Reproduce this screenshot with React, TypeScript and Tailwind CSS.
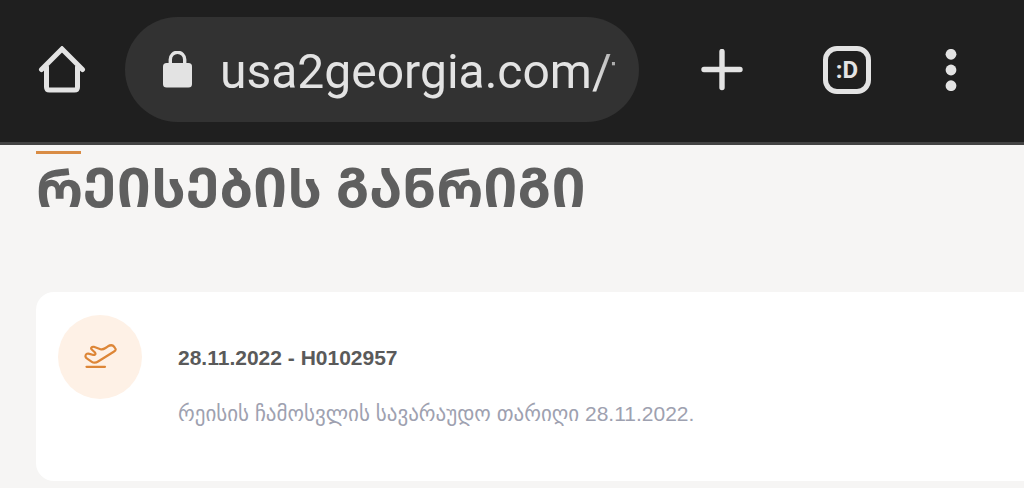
import { useState } from "react";

const HomeIcon = () => (
  <svg width="48" height="48" viewBox="0 0 48 48" fill="none" aria-hidden="true">
    <path
      d="M3.500 23.500 L24 3 L44.500 23.500 M8.500 21 V41 Q8.500 44 11.500 44 H36.500 Q39.500 44 39.500 41 V21"
      stroke="#e3e3e3"
      strokeWidth="5"
      strokeLinecap="round"
      strokeLinejoin="miter"
    />
  </svg>
);

const LockIcon = () => (
  <svg width="30" height="38" viewBox="0 0 30 38" fill="none" aria-hidden="true">
    <rect x="1" y="12" width="29" height="24.500" rx="3.500" fill="#e3e3e3" />
    <path d="M8.300 13 V8.500 A7.200 7.200 0 0 1 22.700 8.500 V13" stroke="#e3e3e3" strokeWidth="3.400" />
  </svg>
);

const PlusIcon = () => (
  <svg width="42" height="42" viewBox="0 0 42 42" aria-hidden="true">
    <path d="M21 2.500 V38.500 M3 20.500 H39" stroke="#e3e3e3" strokeWidth="5.400" strokeLinecap="round" />
  </svg>
);

const MoreIcon = () => (
  <svg width="12" height="42" viewBox="0 0 12 42" fill="#e3e3e3" aria-hidden="true">
    <circle cx="6" cy="5.300" r="5.400" />
    <circle cx="6" cy="21" r="5.400" />
    <circle cx="6" cy="36.700" r="5.400" />
  </svg>
);

const PlaneIcon = () => (
  <svg
    width="34"
    height="26"
    viewBox="0 0 34 26"
    fill="none"
    stroke="#dd8637"
    strokeWidth="2.200"
    strokeLinecap="round"
    strokeLinejoin="round"
    aria-hidden="true"
  >
    <path d="M2.500 11.500 C3 9.800 4.800 9.300 6.500 9.900 L9.500 10.800 C11.500 11.300 13.200 10.300 12 8.500 L9 5.800 C7.200 4.200 8.600 2.400 10.800 2.800 L17.500 5.200 C19.500 5.700 21 5 22.500 4 L25 2.300 C27.500 0.800 30 1.200 31.300 3 L32.600 5 C33 6.200 31.800 7 30.700 7.700 L15.500 17.300 C13 18.900 10.800 19.200 8.800 17.800 L4.500 14.900 C3 13.900 2 13 2.500 11.500 Z" />
    <path d="M3.500 22.800 H22" />
  </svg>
);

const flights = [
  {
    date: "28.11.2022",
    number: "H0102957",
    note: "რეისის ჩამოსვლის სავარაუდო თარიღი 28.11.2022.",
  },
];

const BrowserBar = () => {
  const [url, setUrl] = useState("usa2georgia.com/t");

  return (
    <header className="flex items-center border-b-3 border-[#434343] bg-[#1f1f1f] pt-[17px] pb-5 pl-[38px] pr-[67px]">
      <button type="button" aria-label="Home">
        <HomeIcon />
      </button>
      <div className="ml-[39px] flex h-[105px] min-w-0 flex-1 items-center rounded-full bg-[#323232] pl-[37px] pr-6">
        <LockIcon />
        <input
          type="text"
          aria-label="Address"
          value={url}
          onChange={(e) => setUrl(e.target.value)}
          className="ml-7 min-w-0 flex-1 bg-transparent mask-r-from-95% mask-r-to-110% pt-1 font-['Roboto',sans-serif] text-5xl leading-16 text-[#e3e3e3] outline-none"
        />
      </div>
      <div className="ml-[62px] flex items-center">
        <button type="button" aria-label="New tab">
          <PlusIcon />
        </button>
        <button
          type="button"
          aria-label="Tabs"
          className="ml-20 flex size-12 items-center justify-center rounded-[14px] border-5 border-[#e3e3e3] font-['Roboto',sans-serif] text-2xl font-bold leading-none text-[#e3e3e3]"
        >
          :D
        </button>
        <button type="button" aria-label="More" className="ml-[74px]">
          <MoreIcon />
        </button>
      </div>
    </header>
  );
};

const App = () => {
  return (
    <div className="min-h-screen overflow-hidden bg-[#f6f5f4]">
      <BrowserBar />

      <main className="pt-1.5 pl-9">
        <div className="h-[3px] w-[45px] bg-[#d98c45]" />
        <h1 className="font-['Noto_Sans_Georgian','Noto_Sans','DejaVu_Sans',sans-serif] text-[53px] font-bold leading-16 text-[#5f5f5f]">
          ᲠᲔᲘᲡᲔᲑᲘᲡ ᲒᲐᲜᲠᲘᲒᲘ
        </h1>

        {/* Flights */}
        <div className="mt-[74px]">
          {flights.map((flight) => (
            <article
              key={flight.number}
              className="flex items-start rounded-l-[18px] bg-white px-[22px] pt-[23px] pb-[51px]"
            >
              <div className="flex size-[84px] shrink-0 items-center justify-center rounded-full bg-[#fef1e6]">
                <PlaneIcon />
              </div>
              <div className="ml-9 pt-[27px] font-['Liberation_Sans','DejaVu_Sans',sans-serif]">
                <h2 className="text-[21px] font-bold leading-8 text-[#5a5a5a]">
                  {flight.date} - {flight.number}
                </h2>
                <p className="mt-6 text-[21px] leading-8 text-[#9ea1b0]">{flight.note}</p>
              </div>
            </article>
          ))}
        </div>
      </main>
    </div>
  );
};

export default App;
